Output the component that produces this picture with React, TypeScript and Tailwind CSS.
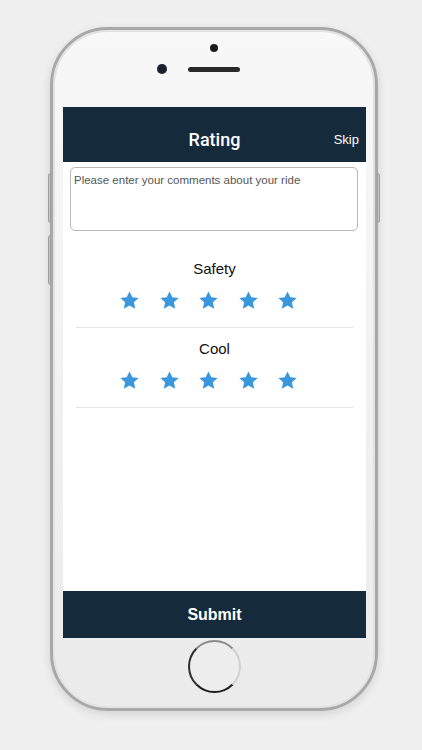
import React from 'react'

const font = { fontFamily: '"Liberation Sans", Arial, sans-serif' }

function Star() {
  return (
    <svg viewBox="0 0 24 24" className="w-[21px] h-[21px]">
      <polygon
        points="12,1.6 15.2,8.3 22.5,9.1 17,14.1 18.5,21.4 12,17.7 5.5,21.4 7,14.1 1.5,9.1 8.8,8.3"
        fill="#3a97dc"
      />
    </svg>
  )
}

function RatingRow({ label }: { label: string }) {
  return (
    <div className="mx-[13px] pt-[11px] pb-[16px] border-b border-[#e4e4e4]">
      <div className="text-center text-[15px] leading-[20px] text-[#111]">{label}</div>
      <div className="mt-[11px] flex justify-center gap-[18.5px] pr-[12px]">
        <Star />
        <Star />
        <Star />
        <Star />
        <Star />
      </div>
    </div>
  )
}

export default function App() {
  return (
    <div className="min-h-screen bg-[#efefef] pt-[27px] pl-[50px]" style={font}>
      <div className="relative w-[328px] h-[684px] rounded-[58px] border-[3px] border-[#a8a8a8] bg-gradient-to-b from-[#f8f8f8] to-[#ebebeb] shadow-[inset_0_0_0_2px_#e2e2e2,0_3px_10px_rgba(0,0,0,0.12)]">
        {/* side buttons */}
        <div className="absolute left-[-5px] top-[143px] w-[3px] h-[50px] rounded-l bg-[#c4c4c4] border border-[#a0a0a0]" />
        <div className="absolute left-[-5px] top-[205px] w-[3px] h-[50px] rounded-l bg-[#c4c4c4] border border-[#a0a0a0]" />
        <div className="absolute right-[-5px] top-[143px] w-[3px] h-[50px] rounded-r bg-[#c4c4c4] border border-[#a0a0a0]" />

        {/* top bezel */}
        <div className="pt-[14px] flex flex-col items-center">
          <div className="w-[8px] h-[8px] rounded-full bg-[#1a1a1a]" />
        </div>
        <div className="mt-[12px] grid grid-cols-[1fr_auto_1fr] items-center h-[10px]">
          <div className="flex justify-end mr-[21px]">
            <div className="w-[10px] h-[10px] rounded-full bg-[#1c1f2e] shadow-[inset_0_0_2px_#3a4260]" />
          </div>
          <div className="w-[52px] h-[5px] rounded-full bg-[#2a2a2a]" />
          <div />
        </div>

        {/* screen */}
        <div className="mt-[33px] ml-[10px] w-[303px] h-[531px] bg-white flex flex-col">
          <div className="h-[55px] pt-[10px] bg-[#152a3b] grid grid-cols-[1fr_auto_1fr] items-center text-white">
            <div />
            <div className="text-[18px] font-medium" style={{ fontFamily: 'Roboto, "Liberation Sans", sans-serif' }}>
              Rating
            </div>
            <div className="flex justify-end pr-[7px] text-[13px]">Skip</div>
          </div>
          <textarea
            className="mt-[5px] ml-[7px] w-[288px] h-[64px] border border-[#b8b8b8] rounded-[5px] px-[3px] pt-[5px] text-[11.5px] leading-[15px] text-[#333] placeholder:text-[#555] resize-none outline-none"
            placeholder="Please enter your comments about your ride"
          />
          <div className="mt-[17px]">
            <RatingRow label="Safety" />
            <RatingRow label="Cool" />
          </div>
          <button className="mt-auto h-[47px] bg-[#152a3b] text-white text-[16px] font-bold">Submit</button>
        </div>

        {/* home button */}
        <div className="mt-[2px] mx-auto w-[53px] h-[53px] rounded-full border-2 border-t-[#8a8a8a] border-r-[#d0d0d0] border-b-[#1e1e1e] border-l-[#2e2e2e] bg-[#ededed]" />
      </div>
    </div>
  )
}
